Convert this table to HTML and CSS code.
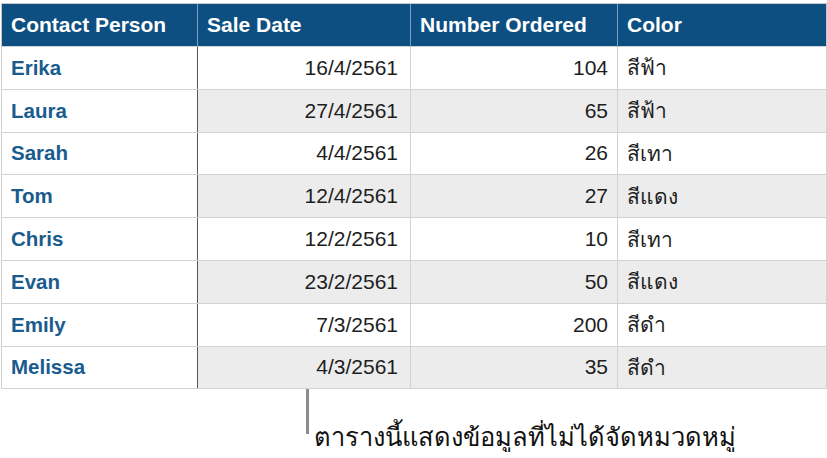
FILE: index.html
```html
<!DOCTYPE html>
<html lang="th">
<head>
<meta charset="utf-8">
<link rel="stylesheet" href="styles.css">
</head>
<body>
<div class="page">
<table class="data">
  <colgroup>
    <col class="c1"><col class="c2"><col class="c3"><col class="c4">
  </colgroup>
  <thead>
    <tr><th>Contact Person</th><th>Sale Date</th><th>Number Ordered</th><th>Color</th></tr>
  </thead>
  <tbody>
    <tr><td class="name">Erika</td><td class="num date">16/4/2561</td><td class="num">104</td><td>สีฟ้า</td></tr>
    <tr class="alt"><td class="name">Laura</td><td class="num date">27/4/2561</td><td class="num">65</td><td>สีฟ้า</td></tr>
    <tr><td class="name">Sarah</td><td class="num date">4/4/2561</td><td class="num">26</td><td>สีเทา</td></tr>
    <tr class="alt"><td class="name">Tom</td><td class="num date">12/4/2561</td><td class="num">27</td><td>สีแดง</td></tr>
    <tr><td class="name">Chris</td><td class="num date">12/2/2561</td><td class="num">10</td><td>สีเทา</td></tr>
    <tr class="alt"><td class="name">Evan</td><td class="num date">23/2/2561</td><td class="num">50</td><td>สีแดง</td></tr>
    <tr><td class="name">Emily</td><td class="num date">7/3/2561</td><td class="num">200</td><td>สีดำ</td></tr>
    <tr class="alt"><td class="name">Melissa</td><td class="num date">4/3/2561</td><td class="num">35</td><td>สีดำ</td></tr>
  </tbody>
</table>
<div class="callout">
  <div class="line"></div>
  <div class="caption">ตารางนี้แสดงข้อมูลที่ไม่ได้จัดหมวดหมู่</div>
</div>
</div>
</body>
</html>
```
FILE: styles.css
```css
html, body { margin: 0; padding: 0; background: #fff; }
body { font-family: "Liberation Sans", Arial, "Noto Sans", sans-serif; color: #222; }
.page { padding: 3px 0 0 1px; width: 826px; }
.data { border-collapse: collapse; width: 825px; table-layout: fixed; }
.c1 { width: 196px; } .c2 { width: 213px; } .c3 { width: 207px; } .c4 { width: 209px; }
.data th {
  background: #0d4f81; color: #fff; font-weight: bold; font-size: 21px;
  text-align: left; height: 43px; padding: 0 9px; box-sizing: border-box;
  border-left: 1px solid #7fa0c0; border-top: 1px solid #c8c8c8;
  white-space: nowrap;
}
.data th:first-child { border-left: 1px solid #c8c8c8; }
.data th:last-child { border-right: 1px solid #c8c8c8; }
.data td {
  height: 42.8px; box-sizing: border-box; padding: 0 9px; font-size: 21px;
  border: 1px solid #d2d2d2; color: #1e1e1e;
}
.data td.name { color: #1a5b8e; font-weight: bold; font-size: 20.5px; border-right: 1px solid #555; }
.data td.num { text-align: right; }
.data td.date { padding-right: 12px; }
.data tr.alt td:not(.name) { background: #ececec; }
.callout { display: flex; align-items: flex-start; padding-left: 305px; }
.line { width: 3px; height: 45px; background: #8c8c8c; }
.caption { font-size: 25.5px; color: #111; margin-left: 5px; line-height: 30px; margin-top: 33px; }
```
